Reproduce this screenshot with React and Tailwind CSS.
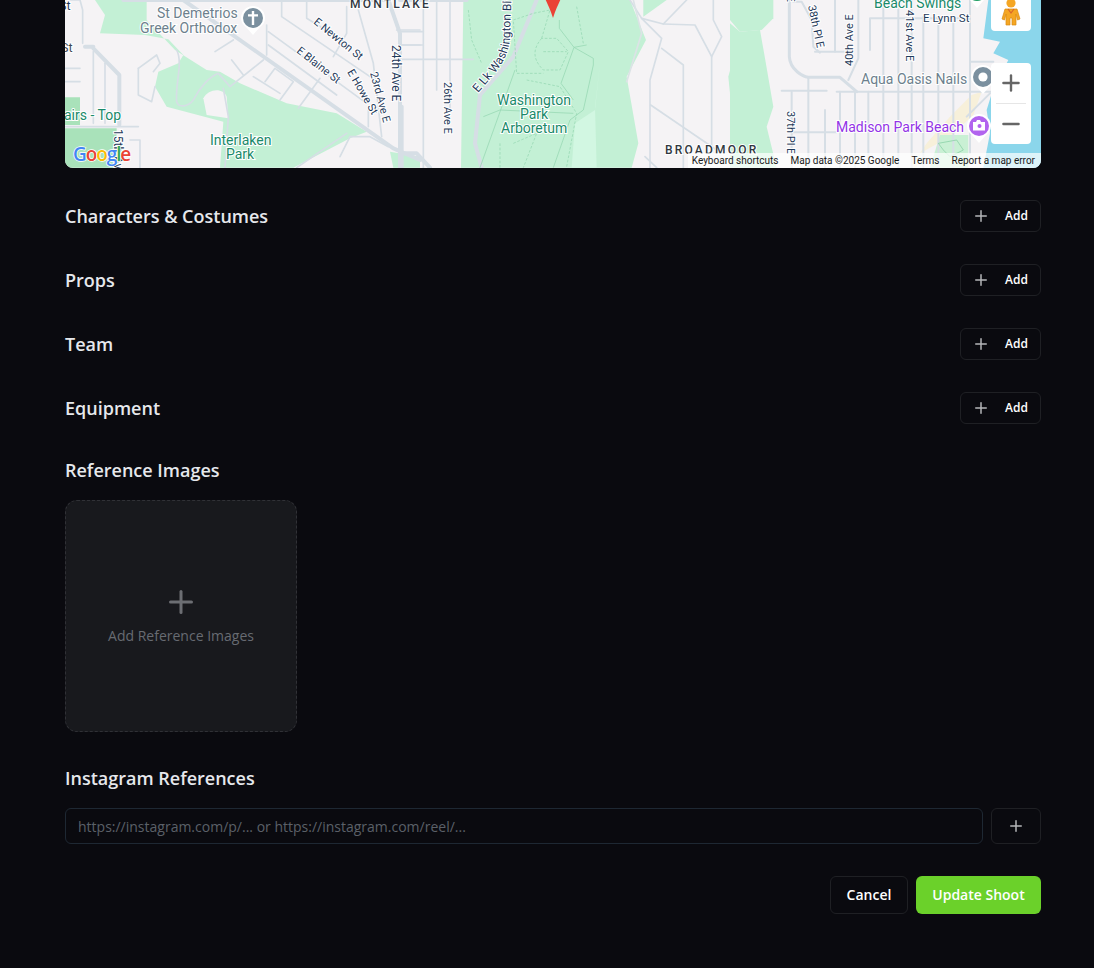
import React from "react";
import { Plus, Minus } from "lucide-react";

const R = "#d6dee5";
const G = "#c3f0d5";
const road = { fill: "none", stroke: R, strokeLinecap: "round", strokeLinejoin: "round" };

function L({ x, y, r = 0, size = 12, color = "#1f3a5a", children, anchor = "start", weight = 400, spacing }) {
  return (
    <text
      x={x}
      y={y}
      transform={r ? `rotate(${r} ${x} ${y})` : undefined}
      fontSize={size}
      fontFamily="Roboto, sans-serif"
      fontWeight={weight}
      fill={color}
      stroke="#ffffff"
      strokeWidth="2"
      paintOrder="stroke"
      textAnchor={anchor}
      letterSpacing={spacing}
    >
      {children}
    </text>
  );
}

function Pin({ x, y, color, children }) {
  return (
    <g transform={`translate(${x} ${y})`}>
      <path d="M-12 0a12 12 0 1 1 24 0c0 4-2 7-5 9l-7 8-7-8c-3-2-5-5-5-9z" fill="#fff" />
      <circle r="10" fill={color} />
      {children}
    </g>
  );
}

function MapArt() {
  return (
    <svg viewBox="0 0 976 168" width="976" height="168" className="block">
      <rect width="976" height="168" fill="#f5f3f5" />

      {/* left region, drawn in crop coordinates */}
      <g transform="translate(-5 0) scale(.33333)">
        <path fill={G} d="M105 0L135 45L120 100L255 105L325 118L370 165L355 190L295 215L285 260L320 320L490 365L480 503L700 503L870 415L920 395L830 340L680 310L540 250L480 215L440 210L345 150L260 60L260 0Z" />
        <path fill="#f5f3f5" d="M430 295C445 265 490 262 500 290L505 355L440 345Z" />
        <path fill="#a9e2ba" d="M15 292H60V375H15ZM15 385H170V503H15Z" />
        <path fill={G} d="M990 455L1080 470V503H1000Z" />
        <g {...road} strokeWidth="5">
          <path d="M30 0H60L68 30V130" />
          <path d="M15 205H60" />
          <path d="M15 245H60" />
          <path d="M100 155V370" />
          <path d="M135 190V370" />
          <path d="M15 380H235" />
          <path d="M235 205L290 165L300 190L280 215" />
          <path d="M235 205V285L275 305L285 260" />
          <path d="M350 150C370 190 345 250 350 305C355 325 385 320 400 300C420 260 450 230 475 220L510 260L610 180" />
          <path d="M490 265L505 350L495 503" />
          <path d="M465 155L520 120" />
          <path d="M515 180L550 225" />
          <path d="M580 230L660 280" />
          <path d="M615 245L645 205L700 245L660 300" />
          <path d="M620 75V165" />
          <path d="M625 95L920 310" />
          <path d="M625 135L830 285" />
          <path d="M780 235L715 325" />
          <path d="M665 0V50L930 230" />
          <path d="M740 0V55L830 110" />
          <path d="M860 20V100L820 170" />
          <path d="M895 30L940 190L965 410" />
          <path d="M925 330V380" />
          <path d="M1010 90H1080M1020 135H1080" />
          <path d="M870 410L840 470M870 410H930L985 440" />
          <path d="M860 400L710 503" />
          <path d="M210 420H240V503" />
        </g>
        <g {...road} strokeWidth="12">
          <path d="M100 140H75M100 145L178 225V375" />
          <path d="M190 0H980" />
          <path d="M370 0L1000 445L1080 480" />
          <path d="M985 0L1020 100V503" />
        </g>
      </g>

      {/* centre region */}
      <g transform="translate(335 0) scale(.33333)">
        <path fill={G} d="M190 0H690L738 120L680 230L715 430L695 503H183Z" />
        <path fill="#d2f7e2" d="M600 190L585 330L525 370L515 503H590L585 320Z" />
        <path fill={G} d="M730 50L800 0H730Z" />
        <path fill={G} d="M1020 100L985 230L1000 380L1020 420Z" />
        <g {...road} strokeWidth="5">
          <path d="M690 0L725 55L785 115L750 240V503" />
          <path d="M725 55L790 72L860 0" />
          <path d="M790 72L885 75L935 170L965 110L940 60V0" />
          <path d="M935 170V440" />
          <path d="M785 145L850 195V503" />
          <path d="M752 315L950 450" />
          <path d="M70 0V503M110 0V270M150 0V330" />
          <path d="M0 95H70M0 135H70M0 178H220" />
          <path d="M735 470L770 503" />
        </g>
        <path {...road} stroke="#dce3e6" strokeWidth="5" d="M680 245L725 100L700 0" />
        <g {...road} strokeWidth="12">
          <path d="M240 285L225 430L245 503" />
          <path d="M240 285L340 170L410 0" />
          <path d="M0 0H200" />
          <path d="M5 460H50L90 503" />
          <path d="M5 320V503" />
        </g>
        <g fill="none" stroke="#9adab6" strokeWidth="2.5">
          <path d="M478 60V85L522 142L580 175L580 195L550 330L510 360L460 503" />
          <path d="M522 142L483 250L520 300" />
          <path d="M522 142L560 135" />
          <path d="M345 210L240 503M250 350L300 330L520 340" />
        </g>
        <g fill="none" stroke="#9adab6" strokeWidth="2.5" strokeDasharray="8 5">
          <path d="M425 115C395 150 400 180 430 210H480L505 155L470 115Z" />
          <path d="M430 155H500" />
          <path d="M425 115L450 30L400 40L340 60L350 220H430" />
          <path d="M205 30L215 120L245 190" />
          <path d="M530 20L550 130" />
          <path d="M380 240L480 260L530 340L500 500" />
          <path d="M340 430L410 400L370 503M300 503V430" />
        </g>
      </g>

      {/* right region */}
      <g transform="translate(665 0) scale(.33333)">
        <path fill={G} d="M0 70L30 95L90 90L105 175L130 320L110 380L140 503H0Z" />
        <path fill={G} d="M45 0H130L130 55L95 90L30 95L0 60V0Z" />
        <path fill="#8bd6eb" d="M775 0H933V503H760L780 400L770 330L790 265L835 180L790 160L810 125L760 115Z" />
        <path fill="#f7f0da" d="M725 285L755 275L730 345L660 410L570 460L560 503H540L590 430L660 350Z" />
        <path fill="#c9f0d4" d="M630 405H715V503H600Z" />
        <g {...road} strokeWidth="6">
          <path d="M420 150V55H720" />
          <path d="M460 0V503M505 0V503M545 0V503M580 50V503M625 50V503M670 50V503" />
          <path d="M720 0V460" />
          <path d="M720 185H790" />
          <path d="M155 272H290M320 275H790" />
          <path d="M330 275V503M375 275V503M415 275V503" />
          <path d="M185 275V503M285 330V503" />
          <path d="M190 397H320" />
          <path d="M235 235V503" />
          <path d="M315 0V155" />
          <path d="M255 155H365" />
          <path d="M385 0V175L355 240" />
          <path d="M190 5H215L245 60L250 140L270 158" />
          <path d="M780 280L710 350" />
        </g>
        <path {...road} strokeWidth="9" d="M178 0V170C180 210 220 230 235 232H330L380 275" />
        <g fill="none" stroke="#7ecb9f" strokeWidth="2">
          <path d="M625 430L680 420L700 450L660 470L640 450Z" />
        </g>
      </g>

      {/* map labels */}
      <L x="-6" y="10" size="12.5">St</L>
      <L x="-4" y="52" size="12.5" color="#3f4a55">St</L>
      <L x="-1" y="120" size="14" color="#1a8a6a">airs - Top</L>
      <L x="49" y="129" r="90" size="12" color="#1f3a5a">15th Ave</L>
      <L x="92" y="18" size="14" color="#6d7f8d">St Demetrios</L>
      <L x="75" y="33" size="14" color="#6d7f8d">Greek Orthodox</L>
      <L x="145" y="145" size="14" color="#1a8a6a">Interlaken</L>
      <L x="161" y="159" size="14" color="#1a8a6a">Park</L>
      <L x="248" y="23" r="39" size="11">E Newton St</L>
      <L x="231" y="52" r="38" size="11">E Blaine St</L>
      <L x="282" y="72" r="60" size="11">E Howe St</L>
      <L x="305" y="73" r="75" size="11">23rd Ave E</L>
      <L x="327" y="45" r="90" size="12">24th Ave E</L>
      <L x="379" y="82" r="90" size="11">26th Ave E</L>
      <L x="285" y="8" size="12" weight="500" spacing="2.2" color="#303740">MONTLAKE</L>
      <path id="lk-path" d="M413 93L431 72Q444 55 445 38L447 -20" fill="none" />
      <text fontSize="12" fontFamily="Roboto, sans-serif" fill="#1f3a5a" stroke="#ffffff" strokeWidth="2" paintOrder="stroke">
        <textPath href="#lk-path">E Lk Washington Blvd</textPath>
      </text>
      <L x="432" y="105" size="14" color="#1a8a6a">Washington</L>
      <L x="455" y="119" size="14" color="#1a8a6a">Park</L>
      <L x="436" y="133" size="14" color="#1a8a6a">Arboretum</L>
      <L x="600" y="154" size="12" weight="500" spacing="2.2" color="#303740">BROADMOOR</L>
      <L x="722" y="-50" r="90" size="11">39th Ave E</L>
      <L x="743" y="6" r="78" size="11">38th Pl E</L>
      <L x="788" y="66" r="-90" size="11">40th Ave E</L>
      <L x="841" y="10" r="90" size="11">41st Ave E</L>
      <L x="858" y="22" size="11.5">E Lynn St</L>
      <L x="809" y="8" size="14" color="#1a8a6a">Beach Swings</L>
      <L x="796" y="84" size="14" color="#6d7f8d">Aqua Oasis Nails</L>
      <L x="722" y="111" r="90" size="11">37th Pl E</L>
      <L x="771" y="132" size="14" color="#9334e6">Madison Park Beach</L>

      {/* pois */}
      <Pin x="188" y="18" color="#7b909f">
        <path d="M-1.2-7h2.4v3.2H5v2.4H1.2V7h-2.4v-8.4H-5v-2.4h3.8z" fill="#fff" />
      </Pin>
      <Pin x="918" y="77" color="#7b909f">
        <circle r="4.6" fill="#fff" />
      </Pin>
      <Pin x="914" y="126" color="#b264ee">
        <path d="M-6-4h3l1-2h3l1 2h4v8.5H-6z" fill="#fff" />
        <circle cx="0.5" cy="0" r="2" fill="#b264ee" />
      </Pin>
      <Pin x="912" y="-9" color="#1f9d62" />

      {/* red marker */}
      <path d="M477 -14C477 -4 483 2 488 18C493 2 499 -4 499 -14Z" fill="#ea4335" />

      {/* logo */}
      <text x="8" y="161" fontFamily="'Open Sans', sans-serif" fontSize="19" fontWeight="600" letterSpacing="-1.1" stroke="#fff" strokeWidth="1.5" paintOrder="stroke">
        <tspan fill="#4285f4">G</tspan><tspan fill="#ea4335">o</tspan><tspan fill="#fbbc05">o</tspan><tspan fill="#4285f4">g</tspan><tspan fill="#34a853">l</tspan><tspan fill="#ea4335">e</tspan>
      </text>
    </svg>
  );
}

function AddRow({ title }) {
  return (
    <div className="flex items-center justify-between">
      <h3 className="text-lg font-semibold text-[#e6e8ec]">{title}</h3>
      <button className="flex h-8 w-[81px] items-center gap-[15px] rounded-md border border-[#1f2024] pl-[11px] text-xs font-semibold text-white">
        <Plus size={18} strokeWidth={2} className="text-[#b5b6b9]" />
        Add
      </button>
    </div>
  );
}

export default function App() {
  return (
    <div className="h-[968px] overflow-hidden bg-[#0a0a0f] pl-[65px] pr-[53px] font-['Open_Sans',sans-serif]">
      <div className="relative h-[168px] overflow-hidden rounded-b-lg">
        <MapArt />
        <div className="absolute right-[10px] top-[-9px] flex h-[40px] w-[40px] items-center justify-center rounded-sm bg-white">
          <svg width="20" height="34" viewBox="0 0 20 34">
            <circle cx="10" cy="9" r="4.6" fill="#f5a623" />
            <path d="M4 15h12l3 10-2.5 1L15 20v11h-4v-7H9v7H5V20l-1.5 6L1 25z" fill="#f5a623" stroke="#d98b12" strokeWidth=".7" />
            <path d="M7 15l3 4 3-4" fill="none" stroke="#d9662a" strokeWidth="1.2" />
          </svg>
        </div>
        <div className="absolute right-[10px] top-[63px] flex h-[81px] w-[40px] flex-col items-center rounded-sm bg-white">
          <div className="flex h-[40px] w-full items-center justify-center text-[#666666]">
            <Plus size={26} strokeWidth={2.2} />
          </div>
          <div className="h-px w-[30px] bg-[#e6e6e6]" />
          <div className="flex h-[40px] w-full items-center justify-center text-[#666666]">
            <Minus size={26} strokeWidth={2.2} />
          </div>
        </div>
        <div className="absolute bottom-0 right-0 flex h-[15px] w-[353px] items-center justify-end gap-[12px] bg-white/70 pr-[6px] font-['Roboto',sans-serif] text-[10px] leading-none text-[#1a1a1a]">
          <span>Keyboard shortcuts</span>
          <span>Map data ©2025 Google</span>
          <span>Terms</span>
          <span>Report a map error</span>
        </div>
      </div>

      <div className="mt-8 flex flex-col gap-8">
        <AddRow title="Characters & Costumes" />
        <AddRow title="Props" />
        <AddRow title="Team" />
        <AddRow title="Equipment" />

        <div>
          <h3 className="mb-4 text-lg font-semibold text-[#e6e8ec]">Reference Images</h3>
          <button className="flex h-[232px] w-[232px] flex-col items-center justify-center rounded-xl border border-dashed border-[#303136] bg-[#18191d] pb-[2px]">
            <Plus size={36} strokeWidth={2} className="text-[#6c6e73]" />
            <span className="mt-[6px] text-sm text-[#676b72]">Add Reference Images</span>
          </button>
        </div>

        <div>
          <h3 className="mb-4 text-lg font-semibold text-[#e6e8ec]">Instagram References</h3>
          <div className="flex gap-2">
            <input
              readOnly
              placeholder="https://instagram.com/p/... or https://instagram.com/reel/..."
              className="h-9 flex-1 rounded-md border border-[#1e2833] bg-transparent px-3 text-sm placeholder:text-[#5b6068]"
            />
            <button className="flex h-9 w-[50px] items-center justify-center rounded-md border border-[#1f2024] text-[#b5b6b9]">
              <Plus size={18} strokeWidth={2} />
            </button>
          </div>
        </div>

        <div className="flex justify-end gap-2">
          <button className="h-[38px] w-[78px] rounded-md border border-[#1f2024] text-sm font-semibold text-white">Cancel</button>
          <button className="h-[38px] w-[125px] rounded-md bg-[#6bd12a] text-sm font-semibold text-white">Update Shoot</button>
        </div>
      </div>
    </div>
  );
}
